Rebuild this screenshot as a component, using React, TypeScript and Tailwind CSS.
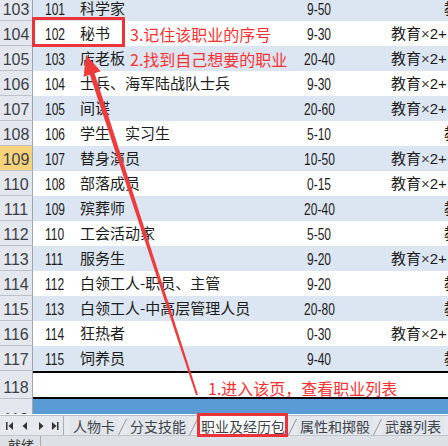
import { ReactNode } from 'react';

type Fila = {
  num: number;
  id: string;
  nombre: string;
  rango: string;
  extra: 'full' | 'clip';
};

const filas: Fila[] = [
  { num: 103, id: '101', nombre: '科学家', rango: '9-50', extra: 'clip' },
  { num: 104, id: '102', nombre: '秘书', rango: '9-30', extra: 'full' },
  { num: 105, id: '103', nombre: '店老板', rango: '20-40', extra: 'full' },
  { num: 106, id: '104', nombre: '士兵、海军陆战队士兵', rango: '9-30', extra: 'full' },
  { num: 107, id: '105', nombre: '间谍', rango: '20-60', extra: 'full' },
  { num: 108, id: '106', nombre: '学生、实习生', rango: '5-10', extra: 'clip' },
  { num: 109, id: '107', nombre: '替身演员', rango: '10-50', extra: 'full' },
  { num: 110, id: '108', nombre: '部落成员', rango: '0-15', extra: 'full' },
  { num: 111, id: '109', nombre: '殡葬师', rango: '20-40', extra: 'clip' },
  { num: 112, id: '110', nombre: '工会活动家', rango: '5-50', extra: 'clip' },
  { num: 113, id: '111', nombre: '服务生', rango: '9-20', extra: 'full' },
  { num: 114, id: '112', nombre: '白领工人-职员、主管', rango: '9-20', extra: 'clip' },
  { num: 115, id: '113', nombre: '白领工人-中高层管理人员', rango: '20-80', extra: 'clip' },
  { num: 116, id: '114', nombre: '狂热者', rango: '0-30', extra: 'full' },
  { num: 117, id: '115', nombre: '饲养员', rango: '9-40', extra: 'clip' },
];

const hojas = ['人物卡', '分支技能', '职业及经历包', '属性和掷骰', '武器列表'];

function Encabezado({ num, activo, children }: { num: number; activo?: boolean; children?: ReactNode }) {
  return (
    <div
      className={`w-[33px] shrink-0 flex items-end justify-center pb-[1px] border-r border-b border-r-[#9ea6b0] border-b-[#bcc2ca] text-[16px] leading-[18px] text-[#3a3f48] font-['Liberation_Sans',sans-serif] ${
        activo ? 'bg-[#f6d27a]' : 'bg-[#e4e8ee]'
      }`}
    >
      {children ?? num}
    </div>
  );
}

function Numero({ texto }: { texto: string }) {
  return (
    <span className="inline-block scale-x-75 origin-left text-[16px] font-['Liberation_Sans',sans-serif]">
      {texto}
    </span>
  );
}

// flechas de navegación de hojas
function Navegacion() {
  return (
    <svg width="58" height="12" viewBox="0 0 58 12" className="ml-[4px]">
      <rect x="2" y="2" width="1.5" height="8" fill="#333" />
      <polygon points="9,2 9,10 4.5,6" fill="#333" />
      <polygon points="23,2 23,10 18.5,6" fill="#333" />
      <polygon points="35,2 35,10 39.5,6" fill="#333" />
      <polygon points="48,2 48,10 52.5,6" fill="#333" />
      <rect x="53" y="2" width="1.5" height="8" fill="#333" />
    </svg>
  );
}

function Separador() {
  return (
    <svg width="9" height="20" viewBox="0 0 9 20" className="shrink-0">
      <line x1="0.5" y1="19" x2="8.5" y2="3" stroke="#8e949c" strokeWidth="1" />
    </svg>
  );
}

export default function App() {
  return (
    <div className="relative w-[448px] h-[446px] overflow-hidden bg-white font-['Noto_Sans_CJK_SC',sans-serif] text-[#1c1c1c]">
      <div className="flex flex-col -mt-[4px]">
        {filas.map((f, i) => (
          <div key={f.num} className={`flex h-[25px] ${i % 2 === 0 ? 'bg-[#dce6f2]' : 'bg-white'}`}>
            <Encabezado num={f.num} activo={f.num === 109} />
            <div className="w-[47px] shrink-0 pl-[12px] pt-[3px] leading-[18px]">
              <Numero texto={f.id} />
            </div>
            <div className="w-[200px] shrink-0 pt-[2px] text-[15px] leading-[20px] whitespace-nowrap overflow-visible">
              {f.nombre}
            </div>
            <div className="w-[78px] shrink-0 pt-[3px] leading-[18px] flex justify-center">
              <span className="inline-block w-[52px] text-center">
                <span className="inline-block scale-x-75 text-[16px] font-['Liberation_Sans',sans-serif]">{f.rango}</span>
              </span>
            </div>
            <div className="flex-1 pt-[2px] text-[15px] leading-[20px] whitespace-nowrap overflow-hidden">
              {f.extra === 'full' ? (
                <span className="pl-[33px]">
                  教育
                  <span className="font-['Liberation_Sans',sans-serif]">
                    <span className="text-[#444]">×</span>2+
                  </span>
                </span>
              ) : (
                <span className="pl-[86px]">教育</span>
              )}
            </div>
          </div>
        ))}

        <div className="flex h-[28px] bg-white">
          <Encabezado num={118} />
          <div className="flex-1 border-y-2 border-black" />
        </div>

        <div className="flex h-[15px] overflow-hidden">
          <div className="w-[33px] shrink-0 bg-[#e4e8ee] border-r border-[#9ea6b0] overflow-hidden flex justify-center">
            <span className="text-[16px] leading-[18px] text-[#3a3f48] font-['Liberation_Sans',sans-serif] mt-[12px]">119</span>
          </div>
          <div className="flex-1 bg-[#5b9bd5]" />
        </div>
      </div>

      <div className="absolute left-0 top-[415px] w-full h-[20px] bg-[#e6e9ed] border-t border-[#b6bcc4] flex items-center text-[14px] leading-[18px] text-[#3e434a]">
        <div className="w-[64px] shrink-0 flex items-center h-full border-r border-[#a8aeb6]">
          <Navegacion />
        </div>
        <div className="w-[6px] shrink-0" />
        {hojas.map((h, i) => (
          <div key={h} className="flex items-center h-full">
            <div
              className={`h-full flex items-center px-[3px] whitespace-nowrap ${
                h === '职业及经历包' ? 'bg-white' : 'bg-[#e2e6eb]'
              }`}
            >
              {h}
            </div>
            {i < hojas.length - 1 && <Separador />}
          </div>
        ))}
      </div>

      <div className="absolute left-0 top-[435px] w-full h-[11px] bg-[#dde1e6] border-t border-[#c2c7cd] flex overflow-hidden">
        <div className="w-[41px] border-r border-[#a8aeb6] pl-[8px] text-[13px] leading-[18px] text-[#333]">就绪</div>
      </div>

      {/* anotaciones */}
      <div className="absolute left-[32px] top-[17px] w-[93px] h-[30px] border-[3px] border-[#ec3339]" />
      <div className="absolute left-[130px] top-[24px] text-[16px] leading-[20px] text-[#ff3131] whitespace-nowrap">
        3.记住该职业的序号
      </div>
      <div className="absolute left-[130px] top-[49px] text-[16px] leading-[20px] text-[#ff3131] whitespace-nowrap">
        2.找到自己想要的职业
      </div>
      <div className="absolute left-[208px] top-[378px] text-[16px] leading-[20px] text-[#ff3131] whitespace-nowrap">
        1.进入该页，查看职业列表
      </div>
      <div className="absolute left-[197px] top-[413px] w-[91px] h-[24px] border-[3px] border-[#ec3339]" />

      <svg className="absolute left-0 top-0" width="448" height="446" viewBox="0 0 448 446">
        <polygon
          points="86,55 100.75,71.2 94.6,73.2 197.95,394.7 196.05,395.3 89.8,74.8 83.6,76.8"
          fill="#ee3b3b"
        />
      </svg>
    </div>
  );
}
